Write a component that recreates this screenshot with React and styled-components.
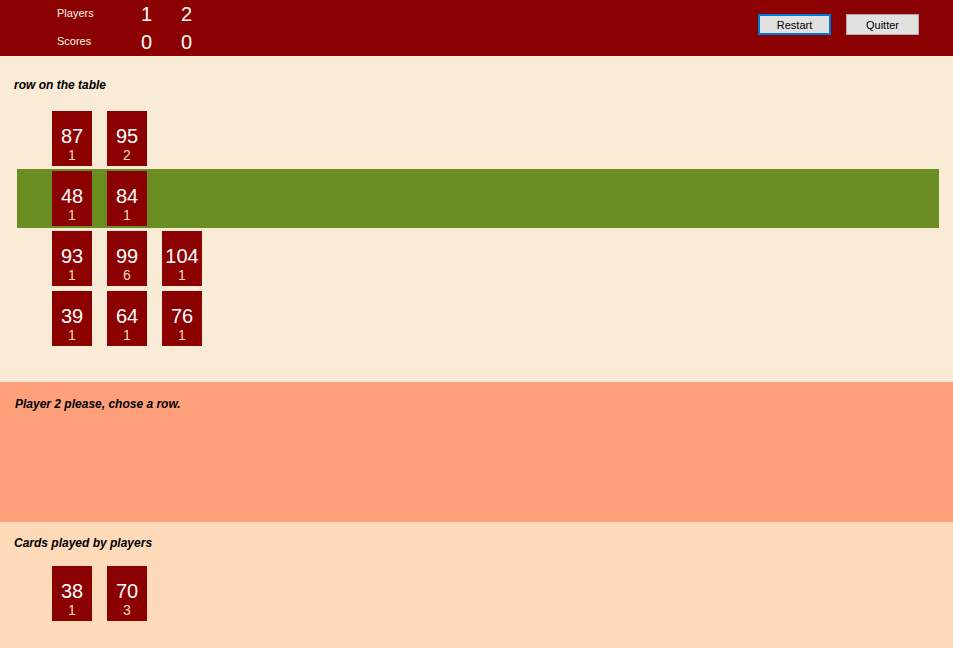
import React from 'react';
import styled, { createGlobalStyle } from 'styled-components';

const GlobalStyle = createGlobalStyle`
  html, body {
    margin: 0;
    padding: 0;
    background: #faebd7;
  }
  body {
    font-family: "Liberation Sans", Arial, sans-serif;
  }
`;

const Page = styled.div`
  width: 953px;
  height: 648px;
  display: flex;
  flex-direction: column;
  overflow: hidden;
`;

const Header = styled.header`
  height: 56px;
  flex: none;
  background: #8b0000;
  display: flex;
  justify-content: space-between;
  align-items: flex-start;
`;

const ScoreGrid = styled.div`
  display: grid;
  grid-template-columns: 83px 40px 40px;
  grid-template-rows: 27px 27px;
  padding: 1px 0 0 57px;
  color: #fff;
`;

const Label = styled.div`
  font-size: 11px;
  display: flex;
  align-items: center;
  color: #fff8e7;
  padding-bottom: ${(p) => p.$lift}px;
`;

const Value = styled.div`
  font-size: 20px;
  display: flex;
  align-items: center;
  padding-left: 1px;
  padding-top: ${(p) => (p.$low ? '2px' : '0')};
`;

const Buttons = styled.div`
  display: flex;
  gap: 15px;
  padding: 14px 34px 0 0;
`;

const Button = styled.button`
  width: 73px;
  height: 21px;
  box-sizing: border-box;
  background: #e1e1e1;
  border: ${(p) => (p.$focused ? '2px solid #0078d7' : '1px solid #adadad')};
  font-family: "Liberation Sans", Arial, sans-serif;
  font-size: 11px;
  color: #000;
  padding: 0;
  border-radius: 0;
`;

const Section = styled.section`
  background: ${(p) => p.$bg};
  height: ${(p) => p.$h}px;
  flex: none;
  box-sizing: border-box;
  padding: ${(p) => p.$pad};
`;

const Title = styled.div`
  font-size: 12px;
  font-weight: bold;
  font-style: italic;
  line-height: 14px;
  color: #000;
  padding-left: ${(p) => p.$left || 14}px;
`;

const Rows = styled.div`
  margin: ${(p) => p.$top}px 0 0 17px;
  width: 922px;
  display: flex;
  flex-direction: column;
  gap: 1px;
`;

const Row = styled.div`
  height: 59px;
  box-sizing: border-box;
  padding: 2px 0 0 35px;
  display: flex;
  gap: 15px;
  background: ${(p) => (p.$active ? '#6b8e23' : 'transparent')};
`;

const Card = styled.div`
  width: 40px;
  height: 55px;
  background: #8b0000;
  display: flex;
  flex-direction: column;
  align-items: center;
  padding-top: 15px;
  box-sizing: border-box;
`;

const Big = styled.div`
  font-size: 20px;
  line-height: 20px;
  color: #fff;
`;

const Small = styled.div`
  font-size: 14px;
  line-height: 14px;
  color: #f5deb3;
  margin-top: 2px;
`;

const rows = [
  [[87, 1], [95, 2]],
  [[48, 1], [84, 1]],
  [[93, 1], [99, 6], [104, 1]],
  [[39, 1], [64, 1], [76, 1]],
];

const played = [[38, 1], [70, 3]];

const CardView = ({ value, heads }) => (
  <Card>
    <Big>{value}</Big>
    <Small>{heads}</Small>
  </Card>
);

export default function App() {
  return (
    <Page>
      <GlobalStyle />
      <Header>
        <ScoreGrid>
          <Label $lift={4}>Players</Label>
          <Value>1</Value>
          <Value>2</Value>
          <Label $lift={2}>Scores</Label>
          <Value $low>0</Value>
          <Value $low>0</Value>
        </ScoreGrid>
        <Buttons>
          <Button $focused>Restart</Button>
          <Button>Quitter</Button>
        </Buttons>
      </Header>

      <Section $bg="#faebd7" $h={326} $pad="22px 0 0 0">
        <Title>row on the table</Title>
        <Rows $top={17}>
          {rows.map((r, i) => (
            <Row key={i} $active={i === 1}>
              {r.map(([v, h]) => (
                <CardView key={v} value={v} heads={h} />
              ))}
            </Row>
          ))}
        </Rows>
      </Section>

      <Section $bg="#ffa07a" $h={140} $pad="15px 0 0 0">
        <Title $left={15}>Player 2 please, chose a row.</Title>
      </Section>

      <Section $bg="#ffdab9" $h={126} $pad="14px 0 0 0">
        <Title>Cards played by players</Title>
        <Rows $top={14}>
          <Row>
            {played.map(([v, h]) => (
              <CardView key={v} value={v} heads={h} />
            ))}
          </Row>
        </Rows>
      </Section>
    </Page>
  );
}
